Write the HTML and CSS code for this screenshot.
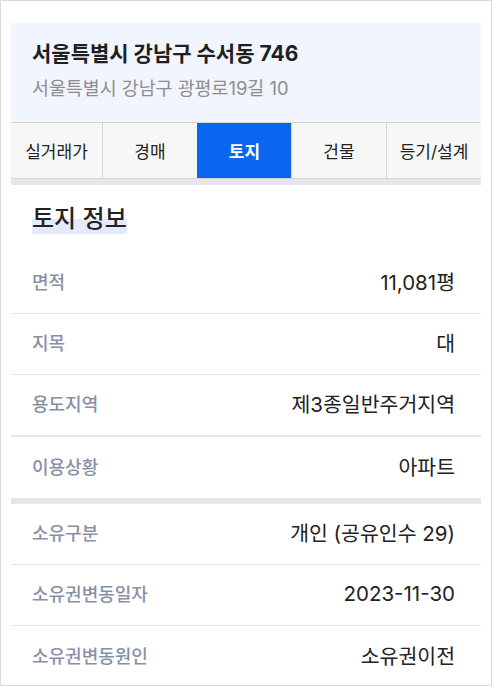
FILE: index.html
```html
<!DOCTYPE html>
<html lang="ko">
<head>
  <meta charset="UTF-8" />
  <title>토지 정보</title>
  <link rel="stylesheet" href="styles.css">
</head>
<body>

<div class="page">
  <div class="header">
    <h1 class="title">서울특별시 강남구 수서동 746</h1>
    <p class="subtitle">서울특별시 강남구 광평로19길 10</p>
  </div>

  <div class="tabs">
    <div class="tab">실거래가</div>
    <div class="tab">경매</div>
    <div class="tab active">토지</div>
    <div class="tab">건물</div>
    <div class="tab">등기/설계</div>
  </div>

  <div class="section">
    <div class="section-head">
      <h2 class="section-title">토지 정보</h2>
    </div>
    <div class="row">
      <span class="label">면적</span>
      <span class="value">11,081평</span>
    </div>
    <div class="row">
      <span class="label">지목</span>
      <span class="value">대</span>
    </div>
    <div class="row thick">
      <span class="label">용도지역</span>
      <span class="value">제3종일반주거지역</span>
    </div>
    <div class="row last">
      <span class="label">이용상황</span>
      <span class="value">아파트</span>
    </div>
  </div>

  <div class="section">
    <div class="row">
      <span class="label">소유구분</span>
      <span class="value">개인 (공유인수 29)</span>
    </div>
    <div class="row">
      <span class="label">소유권변동일자</span>
      <span class="value">2023-11-30</span>
    </div>
    <div class="row last">
      <span class="label">소유권변동원인</span>
      <span class="value">소유권이전</span>
    </div>
  </div>
</div>

</body>
</html>
```

FILE: styles.css
```css
body {
  margin: 0;
  font-family: Inter, "Noto Sans CJK KR", sans-serif;
  color: #222;
  background: #fff;
}

.page {
  box-sizing: border-box;
  height: 686px;
  border: 1px solid #dadada;
  padding: 22px 10px 0 10px;
  overflow: hidden;
}

.header {
  background: #f0f5fe;
  padding: 16px 21px 20px;
}

.title {
  margin: 0;
  font-size: 21px;
  font-weight: 700;
  line-height: 30px;
  color: #1f1f1f;
}

.subtitle {
  margin: 5px 0 0;
  font-size: 18.4px;
  line-height: 28px;
  color: #8e8e8e;
}

.tabs {
  display: grid;
  grid-template-columns: 91px 95px 94px 95px 1fr;
  background: #f7f7f7;
  border-top: 1px solid #d6d6d6;
  border-bottom: 1px solid #d6d6d6;
}

.tab {
  height: 55px;
  display: flex;
  align-items: center;
  justify-content: center;
  font-size: 17px;
  color: #222;
  border-left: 1px solid #d6d6d6;
}

.tab:first-child {
  border-left: none;
}

.tab.active {
  background: #0a66ef;
  color: #fff;
  font-weight: 700;
  border-left-color: #0a66ef;
}

.section {
  border-top: 6px solid #e3e7eb;
}

.section-head {
  height: 68px;
  padding: 0 21px;
  display: flex;
  align-items: center;
}

.section-title {
  margin: 0;
  font-size: 24px;
  font-weight: 500;
  line-height: 32px;
  background: linear-gradient(transparent 50%, #e3ebfa 50%, #e3ebfa 96%, transparent 96%);
}

.row {
  box-sizing: border-box;
  height: 61px;
  display: flex;
  align-items: center;
  justify-content: space-between;
  padding: 0 26px 4px 21px;
  border-bottom: 1px solid #e6e6e6;
}

.row.thick {
  height: 62px;
  border-bottom-width: 2px;
}

.row.last {
  border-bottom: none;
}

.label {
  font-size: 18px;
  font-weight: 500;
  color: #8790a6;
}

.value {
  font-size: 20.5px;
  color: #222;
}
```
